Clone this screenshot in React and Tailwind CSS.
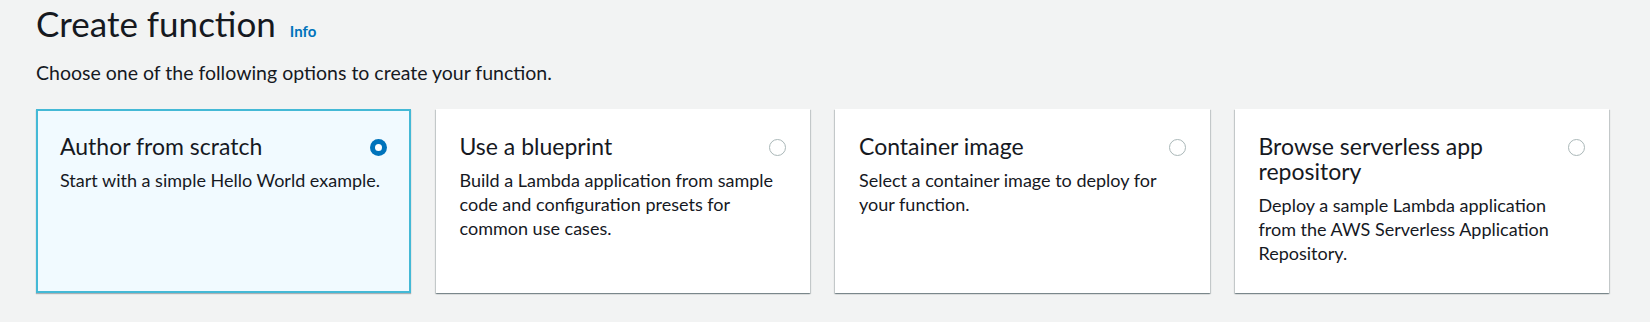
import React from "react";

const options = [
  {
    title: "Author from scratch",
    desc: "Start with a simple Hello World example.",
    selected: true,
  },
  {
    title: "Use a blueprint",
    desc: "Build a Lambda application from sample code and configuration presets for common use cases.",
  },
  {
    title: "Container image",
    desc: "Select a container image to deploy for your function.",
  },
  {
    title: "Browse serverless app repository",
    desc: "Deploy a sample Lambda application from the AWS Serverless Application Repository.",
  },
];

const Radio = ({ checked }) =>
  checked ? (
    <span className="w-[17px] h-[17px] rounded-full bg-[#0073bb] flex items-center justify-center">
      <span className="w-[7px] h-[7px] rounded-full bg-white" />
    </span>
  ) : (
    <span className="block w-[17px] h-[17px] rounded-full border border-[#aab7b8] bg-white" />
  );

const App = () => {
  return (
    <div className="w-full h-[322px] bg-[#f2f3f3] text-[#16191f] font-['Lato',sans-serif] pl-9 pr-[41px] pt-px">
      {/* Header */}
      <div className="flex items-baseline gap-[14px]">
        <h1 className="text-[35px] leading-[44px] font-normal">Create function</h1>
        <a className="text-[15px] font-bold text-[#0073bb]">Info</a>
      </div>
      <p className="text-[19.5px] leading-6 mt-[16px]">
        Choose one of the following options to create your function.
      </p>

      {/* Option tiles */}
      <div className="grid grid-cols-4 gap-[25px] mt-[24px]">
        {options.map((o) => (
          <div
            key={o.title}
            className={
              o.selected
                ? "h-[184px] bg-[#f1faff] border-2 border-[#44b9d6] shadow-[0_1px_1px_0_rgba(0,28,36,0.3)] px-[22px] pt-[23px]"
                : "h-[184px] bg-white shadow-[0_1px_1px_0_rgba(0,28,36,0.3),1px_1px_1px_0_rgba(0,28,36,0.15),-1px_1px_1px_0_rgba(0,28,36,0.15)] px-6 pt-[25px]"
            }
          >
            <div className="flex justify-between items-start gap-5">
              <div className="text-[23px] leading-[25px]">{o.title}</div>
              <div className="pt-[5px] shrink-0">
                <Radio checked={o.selected} />
              </div>
            </div>
            <p className="text-[18px] leading-6 mt-[9px]">{o.desc}</p>
          </div>
        ))}
      </div>
    </div>
  );
};

export default App;
